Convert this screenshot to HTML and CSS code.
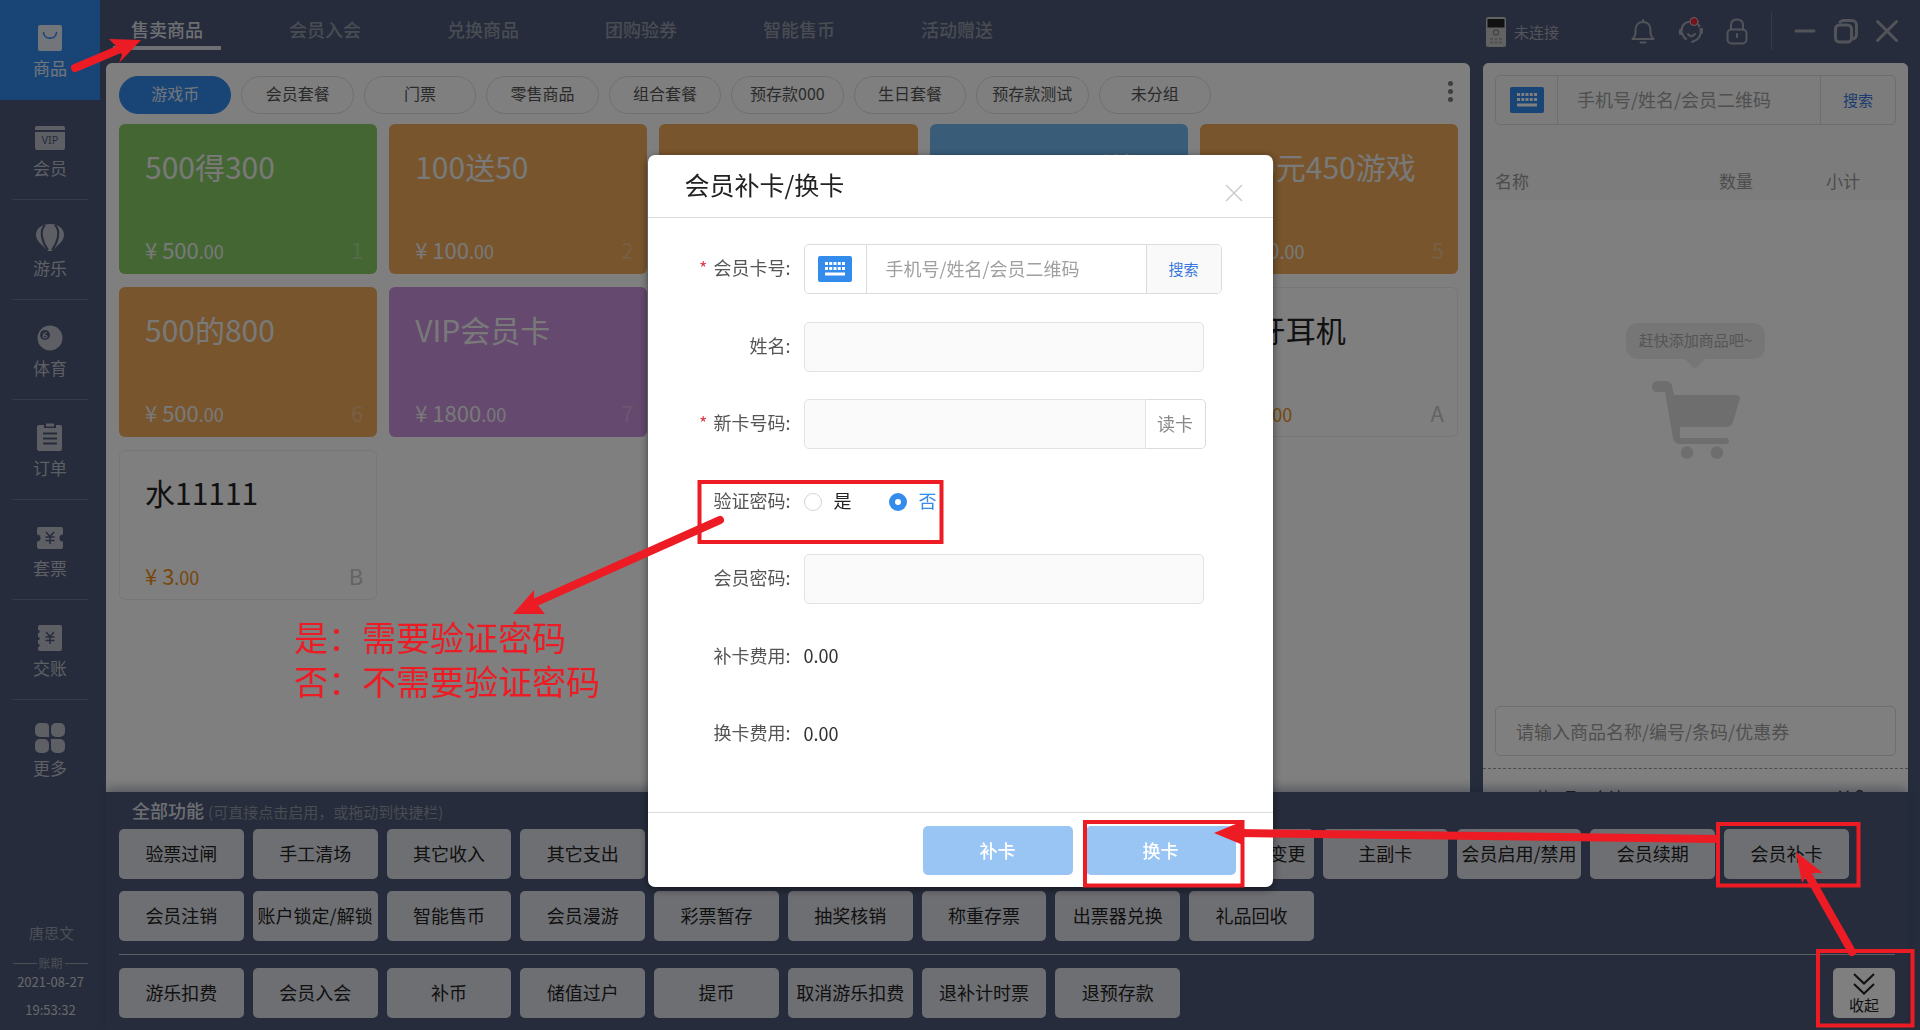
FILE: index.html
```html
<!DOCTYPE html>
<html lang="zh-CN">
<head>
<meta charset="utf-8">
<title>售卖商品 - 会员补卡/换卡</title>
<link rel="stylesheet" href="styles.css">
</head>
<body>
<svg class="sprite" aria-hidden="true">
  <symbol id="icon-keyboard" viewBox="0 0 34 26">
    <rect width="34" height="26" rx="2" fill="#338bec"/>
    <path d="M7 7.5h20M7 12.5h20" stroke="#fff" stroke-width="3" stroke-dasharray="3 1.25"/>
    <path d="M7 18h20" stroke="#fff" stroke-width="3"/>
  </symbol>
</svg>

<div class="app">
  <aside class="sidebar">
    <ul class="side-nav">
      <li><a class="side-link is-active" href="#">
        <svg class="side-icon" viewBox="0 0 32 32"><rect x="4" y="3" width="24" height="26" rx="2" fill="currentColor"/><path d="M9.500 10.500c1 7.500 12 7.500 13 0" fill="none" stroke="#338bec" stroke-width="1.600" stroke-linecap="round"/></svg>
        <span>商品</span></a></li>
      <li><a class="side-link" href="#">
        <svg class="side-icon" viewBox="0 0 32 32"><path d="M1 6a2 2 0 0 1 2-2h26a2 2 0 0 1 2 2v2H1zM1 10h30v16a2 2 0 0 1-2 2H3a2 2 0 0 1-2-2z" fill="currentColor"/><text x="16" y="22" class="vip-text">VIP</text></svg>
        <span>会员</span></a></li>
      <li><a class="side-link" href="#">
        <svg class="side-icon" viewBox="0 0 32 32"><path d="M16 2C24 2 30 6 30 13C30 20 22 24 18 29H14C10 24 2 20 2 13C2 6 8 2 16 2Z" fill="currentColor"/><path d="M11 3C5 9 8 20 14 28M21 3C27 9 24 20 18 28" fill="none" stroke="#4c5977" stroke-width="2"/></svg>
        <span>游乐</span></a></li>
      <li><a class="side-link" href="#">
        <svg class="side-icon" viewBox="0 0 32 32"><circle cx="16" cy="16" r="12.500" fill="currentColor"/><circle cx="11" cy="13" r="5" fill="#4c5977"/><path d="M13 10.500c-4 0-5 5-2 5.500c3 0 2-4-1-2.500" fill="none" stroke="currentColor" stroke-width="1.200"/></svg>
        <span>体育</span></a></li>
      <li><a class="side-link" href="#">
        <svg class="side-icon" viewBox="0 0 32 32"><path d="M5 3h5v3h12V3h4a2 2 0 0 1 2 2v22a2 2 0 0 1-2 2H5a2 2 0 0 1-2-2V5a2 2 0 0 1 2-2z" fill="currentColor"/><path d="M12 1.500h8v3h-8z" fill="currentColor"/><path d="M9 11.500h14M9 16.500h14M9 21.500h14" stroke="#4c5977" stroke-width="2"/></svg>
        <span>订单</span></a></li>
      <li><a class="side-link" href="#">
        <svg class="side-icon" viewBox="0 0 32 32"><path d="M5 5h22a2 2 0 0 1 2 2v5.500a3.500 3.500 0 0 0 0 7V25a2 2 0 0 1-2 2H5a2 2 0 0 1-2-2v-5.500a3.500 3.500 0 0 0 0-7V7a2 2 0 0 1 2-2z" fill="currentColor"/><path d="M12 10l4 4.500l4-4.500M16 14.500V22M11.500 15h9M11.500 18.500h9" fill="none" stroke="#4c5977" stroke-width="1.500"/></svg>
        <span>套票</span></a></li>
      <li><a class="side-link" href="#">
        <svg class="side-icon" viewBox="0 0 32 32"><path d="M6 3h20a2 2 0 0 1 2 2v22a2 2 0 0 1-2 2H6a2 2 0 0 1-2-2v-2h1.500v-3H4v-4h1.500v-3H4v-4h1.500V8H4V5a2 2 0 0 1 2-2z" fill="currentColor"/><path d="M12 10l4 4.500l4-4.500M16 14.500V22M11.500 15h9M11.500 18.500h9" fill="none" stroke="#4c5977" stroke-width="1.500"/></svg>
        <span>交账</span></a></li>
      <li><a class="side-link is-last" href="#">
        <svg class="side-icon" viewBox="0 0 32 32"><path d="M6 1h5a4 4 0 0 1 4 4v10H6a5 5 0 0 1-5-5V6a5 5 0 0 1 5-5zM22 1h4a5 5 0 0 1 5 5v4a5 5 0 0 1-5 5h-4a5 5 0 0 1-5-5V6a5 5 0 0 1 5-5zM6 17h4a5 5 0 0 1 5 5v4a5 5 0 0 1-5 5H6a5 5 0 0 1-5-5v-4a5 5 0 0 1 5-5zM17 17h9a5 5 0 0 1 5 5v4a5 5 0 0 1-5 5h-4a5 5 0 0 1-5-5z" fill="currentColor"/></svg>
        <span>更多</span></a></li>
    </ul>
    <div class="shift">
      <p class="shift-user">唐思文</p>
      <p class="shift-label">账期</p>
      <p class="shift-time">2021-08-27</p>
      <p class="shift-time">19:53:32</p>
    </div>
  </aside>

  <div class="main">
    <header class="topbar">
      <nav class="tabs">
        <a class="tab is-active" href="#">售卖商品</a>
        <a class="tab" href="#">会员入会</a>
        <a class="tab" href="#">兑换商品</a>
        <a class="tab" href="#">团购验券</a>
        <a class="tab" href="#">智能售币</a>
        <a class="tab" href="#">活动赠送</a>
      </nav>
      <div class="device">
        <svg width="20" height="30" viewBox="0 0 20 30"><rect width="20" height="30" rx="2" fill="#c4c4c4"/><rect x="1.500" y="2" width="17" height="8.500" fill="#222"/><circle cx="10" cy="15.500" r="2.600" fill="none" stroke="#888" stroke-width="1.400"/><path d="M4 22h12M4 25.500h12" stroke="#a4a4a4" stroke-width="2" stroke-dasharray="3 1.500"/></svg>
        <span>未连接</span>
      </div>
      <div class="tools">
        <button class="tool" type="button" aria-label="消息"><svg viewBox="0 0 28 28"><path d="M3.500 22h21c-2-2-3-3-3-6v-3c0-5-3-8-7.500-8s-7.500 3-7.500 8v3c0 3-1 4-3 6z"/><path d="M14 5V3M11.500 25.500h5"/></svg></button>
        <button class="tool" type="button" aria-label="客服"><svg viewBox="0 0 28 28"><path d="M5.500 17V14C5.500 8 9.500 4.500 15 4.500c4 0 7 2 8.500 5M4 13v4M6 16c1 3 2 5 4 6M24.500 12v4c0 4-3 7-8.500 9M26 12v4M12 17c2 3 4 3 7 0"/><circle cx="18" cy="4.500" r="4" class="badge"/></svg></button>
        <button class="tool" type="button" aria-label="锁屏"><svg viewBox="0 0 28 28"><rect x="4.500" y="12.500" width="19" height="14" rx="4"/><path d="M8 12V8c0-3.500 2.500-5.500 6-5.500s6 2 6 5.500v4M14 17v3"/></svg></button>
      </div>
      <div class="window-tools">
        <button class="tool" type="button" aria-label="最小化"><svg viewBox="0 0 28 28"><path d="M5 14h18"/></svg></button>
        <button class="tool" type="button" aria-label="还原"><svg viewBox="0 0 28 28"><rect x="3.500" y="8" width="16" height="17" rx="4"/><path d="M8 5c1-1 2-1.500 4-1.500h7c4 0 5.500 1.500 5.500 5.500v8c0 3-1 4-3 5"/></svg></button>
        <button class="tool" type="button" aria-label="关闭"><svg viewBox="0 0 28 28"><path d="M4.500 4.500l19 19M23.500 4.500l-19 19"/></svg></button>
      </div>
    </header>

    <div class="workspace">
      <section class="goods">
        <div class="filters">
          <div class="pills">
            <button class="pill is-active" type="button">游戏币</button>
            <button class="pill" type="button">会员套餐</button>
            <button class="pill" type="button">门票</button>
            <button class="pill" type="button">零售商品</button>
            <button class="pill" type="button">组合套餐</button>
            <button class="pill" type="button">预存款000</button>
            <button class="pill" type="button">生日套餐</button>
            <button class="pill" type="button">预存款测试</button>
            <button class="pill" type="button">未分组</button>
          </div>
          <button class="more" type="button" aria-label="更多分组"><i></i><i></i><i></i></button>
        </div>
        <div class="cards">
          <article class="card green"><h3>500得300</h3><p><span class="price">¥ 500<small>.00</small></span><span class="key">1</span></p></article>
          <article class="card orange"><h3>100送50</h3><p><span class="price">¥ 100<small>.00</small></span><span class="key">2</span></p></article>
          <article class="card orange"></article>
          <article class="card blue"><h3>1000元500送</h3></article>
          <article class="card orange"><h3>300元450游戏</h3><p><span class="price">¥ 300<small>.00</small></span><span class="key">5</span></p></article>
          <article class="card orange"><h3>500的800</h3><p><span class="price">¥ 500<small>.00</small></span><span class="key">6</span></p></article>
          <article class="card purple"><h3>VIP会员卡</h3><p><span class="price">¥ 1800<small>.00</small></span><span class="key">7</span></p></article>
          <article class="card plain row-end"><h3>蓝牙耳机</h3><p><span class="price">¥ 50<small>.00</small></span><span class="key">A</span></p></article>
          <article class="card plain"><h3>水11111</h3><p><span class="price">¥ 3<small>.00</small></span><span class="key">B</span></p></article>
        </div>
      </section>

      <section class="cart">
        <div class="cart-head">
          <div class="search">
            <button class="search-key" type="button" aria-label="键盘"><svg><use href="#icon-keyboard"/></svg></button>
            <input type="text" aria-label="会员查询" placeholder="手机号/姓名/会员二维码">
            <button class="search-go" type="button">搜索</button>
          </div>
          <div class="cart-columns"><span>名称</span><span>数量</span><span>小计</span></div>
        </div>
        <div class="cart-empty">
          <p class="bubble">赶快添加商品吧~</p>
          <svg width="88" height="78" viewBox="0 0 88 78" fill="#dcdcdc"><path d="M5 0H13Q19 0 20 5L22 14H84Q89 14 87.500 19L81 41Q79 46 75 46H28V57H74Q77 57 77 60T74 63H28Q22 63 21 57L13 11H5Q0 11 0 6T5 0Z"/><circle cx="35" cy="71.500" r="6.300"/><circle cx="65" cy="71.500" r="6.300"/></svg>
        </div>
        <div class="cart-entry"><input type="text" aria-label="商品查询" placeholder="请输入商品名称/编号/条码/优惠券"></div>
        <div class="cart-total"><span>共0项，合计</span><span>¥ 0</span></div>
      </section>
    </div>

    <section class="functions">
      <h2>全部功能 <small>(可直接点击启用，或拖动到快捷栏)</small></h2>
      <div class="fn-grid">
        <button type="button">验票过闸</button>
        <button type="button">手工清场</button>
        <button type="button">其它收入</button>
        <button type="button">其它支出</button>
        <button type="button" class="fn-ninth">会员等级变更</button>
        <button type="button">主副卡</button>
        <button type="button">会员启用/禁用</button>
        <button type="button">会员续期</button>
        <button type="button">会员补卡</button>
        <button type="button">会员注销</button>
        <button type="button">账户锁定/解锁</button>
        <button type="button">智能售币</button>
        <button type="button">会员漫游</button>
        <button type="button">彩票暂存</button>
        <button type="button">抽奖核销</button>
        <button type="button">称重存票</button>
        <button type="button">出票器兑换</button>
        <button type="button">礼品回收</button>
      </div>
      <div class="quick">
        <div class="fn-grid">
          <button type="button">游乐扣费</button>
          <button type="button">会员入会</button>
          <button type="button">补币</button>
          <button type="button">储值过户</button>
          <button type="button">提币</button>
          <button type="button">取消游乐扣费</button>
          <button type="button">退补计时票</button>
          <button type="button">退预存款</button>
        </div>
        <button class="collapse" type="button">
          <svg width="22" height="22" viewBox="0 0 22 22"><path d="M1 1l10 9.500L21 1M1 11l10 9.500L21 11" fill="none" stroke="#222" stroke-width="2"/></svg>
          <span>收起</span>
        </button>
      </div>
    </section>
  </div>
</div>

<div class="mask">
  <form class="dialog" role="dialog" aria-labelledby="dialog-title">
    <div class="dialog-head">
      <h1 id="dialog-title">会员补卡/换卡</h1>
      <button class="dialog-close" type="button" aria-label="关闭"><svg width="18" height="18" viewBox="0 0 18 18"><path d="M1 1l16 16M17 1L1 17" stroke="#ccc" stroke-width="1.500"/></svg></button>
    </div>
    <div class="dialog-body">
      <div class="field">
        <label class="is-required" for="card-no">会员卡号:</label>
        <div class="search wide">
          <button class="search-key" type="button" aria-label="键盘"><svg><use href="#icon-keyboard"/></svg></button>
          <input id="card-no" type="text" placeholder="手机号/姓名/会员二维码">
          <button class="search-go" type="button">搜索</button>
        </div>
      </div>
      <div class="field"><label for="member-name">姓名:</label><input class="box" id="member-name" type="text" disabled></div>
      <div class="field">
        <label class="is-required" for="new-card">新卡号码:</label>
        <div class="reader"><input class="box" id="new-card" type="text" disabled><button type="button">读卡</button></div>
      </div>
      <div class="field" role="radiogroup" aria-labelledby="verify-label">
        <span class="label" id="verify-label">验证密码:</span>
        <label class="radio"><input type="radio" name="verify" value="yes"><span>是</span></label>
        <label class="radio"><input type="radio" name="verify" value="no" checked><span>否</span></label>
      </div>
      <div class="field"><label for="member-pass">会员密码:</label><input class="box" id="member-pass" type="password" disabled></div>
      <div class="field"><span class="label">补卡费用:</span><output>0.00</output></div>
      <div class="field"><span class="label">换卡费用:</span><output>0.00</output></div>
    </div>
    <div class="dialog-foot">
      <button type="button">补卡</button>
      <button type="button">换卡</button>
    </div>
  </form>
</div>

<div class="notes">
  <svg width="1920" height="1030" viewBox="0 0 1920 1030">
    <g class="note-line">
      <rect x="699.500" y="482" width="242" height="60"/>
      <rect x="1085" y="822" width="157.500" height="63.500"/>
      <rect x="1718" y="824" width="140.500" height="61.500"/>
      <rect x="1818" y="951" width="94.500" height="74.500"/>
    </g>
    <g class="note-arrow">
      <path d="M75 68L120 49"/><path class="head" d="M141 40L109 39L117 47L122 55L119 63Z"/>
      <path d="M720 520L536 602"/><path class="head" d="M513 614L534 590L534 600L540 608L545 614Z"/>
      <path class="flat" d="M1718 839L1238 833"/><path class="head" d="M1214 833L1243 821V845Z"/>
      <path d="M1852 952L1810 878"/><path class="head" d="M1796 852L1823 873L1814 873L1805 878L1802 883Z"/>
    </g>
  </svg>
  <p class="note-text">是：需要验证密码<br>否：不需要验证密码</p>
</div>
</body>
</html>
```

FILE: styles.css
```css
* { box-sizing: border-box; }

body {
  margin: 0;
  font: 18px/24px "Noto Sans CJK SC", "Noto Sans", sans-serif;
  color: #333;
  background: #4c5977;
}

h1, h2, h3, p, ul { margin: 0; padding: 0; font-weight: 400; }
ul { list-style: none; }
a { text-decoration: none; color: inherit; }
button, input { font: inherit; color: inherit; margin: 0; padding: 0; border: 0; background: none; }
input { min-width: 0; outline: 0; }
.sprite { position: absolute; width: 0; height: 0; }

.app { display: flex; height: 100vh; min-height: 1030px; overflow: hidden; }

/* Sidebar */
.sidebar { flex: 0 0 100px; display: flex; flex-direction: column; justify-content: space-between; color: #bbbfca; }
.side-link {
  display: flex; flex-direction: column; align-items: center; gap: 2px;
  height: 100px; margin: 0 12px; padding-top: 22px;
  border-bottom: 1px solid #6c7690; font-size: 17px;
}
.side-link.is-active { margin: 0; border: 0; background: #338bec; color: #e4ebf5; }
.side-link.is-last { border: 0; }
.side-icon { width: 32px; height: 32px; }
.vip-text { font: 11px/1 "Noto Sans", sans-serif; fill: #4c5977; text-anchor: middle; }
.shift { padding: 0 12px 6px 13px; text-align: center; font-size: 13px; }
.shift-user { font-size: 15px; color: #989eac; margin: 0 -2px 8px 0; }
.shift-label { display: flex; align-items: center; gap: 2px; font-size: 12px; line-height: 20px; color: #989eac; }
.shift-label::before, .shift-label::after { content: ""; flex: 1; border-top: 1px solid #989eac; }
.shift-time { line-height: 28px; color: #cfd2da; margin-top: -5px; }
.shift-time + .shift-time { margin-top: 0; }

/* Top bar */
.main { flex: 1; min-width: 0; display: flex; flex-direction: column; padding: 0 12px 0 6px; }
.topbar { flex: 0 0 63px; display: flex; align-items: flex-start; color: #a4a9b5; }
.tabs { display: flex; gap: 50px; padding-left: 7px; margin-right: auto; }
.tab { width: 108px; height: 50px; padding-top: 14px; line-height: 30px; text-align: center; font-weight: 500; border-bottom: 4px solid transparent; color: #9298a6; }
.tab.is-active { color: #dcdee4; border-color: #dcdee4; }
.device { display: flex; align-items: center; gap: 8px; height: 63px; margin-right: 70px; font-size: 15px; }
.tools { display: flex; gap: 19px; height: 38px; margin-top: 12px; padding-right: 20px; border-right: 1px solid #6c7690; align-items: center; }
.window-tools { display: flex; gap: 13px; height: 38px; margin: 12px 7px 0 19px; align-items: center; }
.tool { width: 28px; height: 28px; }
.tool svg { display: block; width: 28px; height: 28px; fill: none; stroke: #a4a9b5; stroke-width: 2; stroke-linecap: round; stroke-linejoin: round; }
.window-tools svg { stroke-width: 3; }
.tool .badge { fill: #e6263c; stroke: #d5c5cb; stroke-width: 1; }

/* Goods */
.workspace { flex: 1; min-height: 0; display: flex; gap: 13px; }
.goods { flex: 1; min-width: 0; background: #fff; border-radius: 6px 6px 0 0; padding: 13px 12px 0 13px; }
.filters { display: flex; justify-content: space-between; align-items: center; margin-bottom: 10px; }
.pills { flex: 0 1 1092px; display: grid; grid-template-columns: repeat(9, 1fr); gap: 10px; }
.pill { height: 38px; padding-bottom: 3px; border: 1px solid #dcdfe6; border-radius: 19px; font-size: 16px; line-height: 33px; color: #555; white-space: nowrap; }
.pill.is-active { background: #338bec; border-color: #338bec; color: #e4ebf5; }
.more { display: grid; gap: 3px; margin-right: 5px; padding-bottom: 8px; }
.more i { width: 5px; height: 5px; border-radius: 50%; background: #7c7c7c; }
.cards { display: grid; grid-template-columns: repeat(5, 1fr); gap: 13px 12px; }
.card { height: 150px; border-radius: 6px; padding: 22px 14px 9px 26px; display: flex; flex-direction: column; justify-content: space-between; color: #f2f2f2; }
.card h3 { font-size: 30px; line-height: 40px; white-space: nowrap; }
.card p { display: flex; justify-content: space-between; font-size: 22px; line-height: 28px; }
.card small { font-size: 18px; }
.key { opacity: .3; }
.green { background: #88cc66; }
.orange { background: #f0aa5a; }
.blue { background: #72baf2; }
.purple { background: #ca92de; }
.plain { box-shadow: inset 0 0 0 1px #eeeff2; color: #222; }
.plain .price { color: #ee8f13; }
.plain .key { color: #777; opacity: .4; }
.row-end { grid-column: 5; }

/* Search box */
.search { display: flex; height: 50px; border: 1px solid #dcdcdc; border-radius: 5px; overflow: hidden; }
.search-key { flex: 0 0 62px; display: flex; align-items: center; justify-content: center; border-right: 1px solid #dcdcdc; }
.search-key svg { width: 34px; height: 26px; }
.search input { flex: 1; padding: 0 19px 2px; }
.search-go { flex: 0 0 75px; border-left: 1px solid #dcdcdc; font-size: 15px; color: #3878e0; }
input::placeholder { color: #a0a0a0; opacity: 1; }

/* Cart */
.cart { flex: 0 0 425px; display: flex; flex-direction: column; background: #fff; border-radius: 6px 6px 0 0; overflow: hidden; }
.cart-head { background: #f8f8f8; height: 137px; padding: 12px; }
.cart-columns { display: grid; grid-template-columns: 224px 107px 1fr; padding-top: 44px; font-size: 17px; color: #999; }
.cart-empty { flex: 1; display: flex; flex-direction: column; align-items: center; gap: 22px; padding-top: 123px; }
.bubble { position: relative; padding: 5px 13px 7px; border-radius: 12px; background: #ececec; color: #aaa; font-size: 15px; }
.bubble::after { content: ""; position: absolute; top: 100%; left: 50%; margin-left: -10px; border: 10px solid transparent; border-bottom: 0; border-top-color: #ececec; }
.cart-entry { padding: 0 12px 12px; border-bottom: 1px dashed #999; }
.cart-entry input { width: 100%; height: 50px; padding: 0 20px; border: 1px solid #dcdcdc; border-radius: 5px; }
.cart-total { height: 23px; padding: 16px 43px 0 52px; display: flex; justify-content: space-between; font-size: 16px; }
.cart-total span + span { font-size: 20px; }

/* Function panel */
.functions { position: relative; padding: 6px 13px 12px; background: #4c5977; box-shadow: 0 -4px 10px rgba(40, 60, 90, .4); }
.functions h2 { padding-left: 13px; margin-bottom: 7px; font-size: 18px; line-height: 24px; font-weight: 500; color: #dcdee4; }
.functions h2 small { font-size: 15px; line-height: 20px; font-weight: 400; color: #9298a6; }
.fn-grid { display: grid; grid-template-columns: repeat(13, 1fr); gap: 12px 9px; margin-right: 46px; }
.fn-grid button { height: 50px; padding-bottom: 3px; border-radius: 5px; background: #dddee5; color: #222; white-space: nowrap; }
.fn-grid .fn-ninth { grid-column: 9; }
.quick { display: grid; grid-template-columns: 1fr; margin-top: 13px; padding-top: 13px; border-top: 1px solid #b9bdc8; }
.quick .fn-grid, .collapse { grid-area: 1 / 1; }
.collapse { justify-self: end; width: 62px; height: 50px; padding-top: 5px; border-radius: 5px; background: #fff; color: #222; font-size: 15px; line-height: 20px; display: flex; flex-direction: column; align-items: center; }

/* Dialog */
.mask { position: fixed; inset: 0; display: flex; align-items: center; justify-content: center; padding-top: 12px; background: rgba(0, 0, 0, .5); }
.dialog { width: 625px; min-height: 732px; display: flex; flex-direction: column; border-radius: 7px; background: #fff; box-shadow: 0 2px 8px rgba(0, 0, 0, .5); }
.dialog-head { display: flex; align-items: center; justify-content: space-between; height: 63px; padding: 0 30px 0 37px; border-bottom: 1px solid #dcdcdc; }
.dialog-head h1 { padding-bottom: 4px; font-size: 25px; line-height: 36px; color: #222; }
.dialog-close { display: flex; margin-top: 14px; }
.dialog-body { flex: 1; display: flex; flex-direction: column; justify-content: space-between; padding: 26px 0 53px; }
.field { display: flex; align-items: center; height: 50px; color: #333; }
.field > label:first-child, .label { flex: 0 0 156px; padding: 0 13px 4px 0; text-align: right; color: #555; }
.is-required::before { content: "*"; margin-right: 6px; color: #e03a48; }
.search.wide { width: 418px; }
.wide .search-go { background: #f9f9f9; }
.box { width: 400px; height: 50px; padding: 0 20px; border: 1px solid #e2e2e2; border-radius: 5px; background: #fafafa; }
.reader { display: flex; width: 402px; }
.reader .box { flex: 1; border-radius: 5px 0 0 5px; }
.reader button { flex: 0 0 60px; padding-bottom: 2px; border: 1px solid #dcdcdc; border-left: 0; border-radius: 0 5px 5px 0; color: #888; }
.radio { display: flex; align-items: center; gap: 12px; margin-right: 37px; color: #222; }
.radio span { line-height: 22px; padding-bottom: 4px; }
.radio input { appearance: none; width: 18px; height: 18px; border: 1px solid #d4d4d4; border-radius: 50%; background: #fff; }
.radio input:checked { border: 6px solid #338bec; }
.radio input:checked + span { color: #338bec; }
.field output { padding-bottom: 3px; }
.dialog-foot { display: flex; justify-content: flex-end; gap: 13px; height: 75px; padding: 13px 37px 12px 0; border-top: 1px solid #dcdcdc; }
.dialog-foot button { width: 150px; height: 49px; padding-bottom: 2px; border-radius: 5px; background: #99c5f5; color: #fff; font-weight: 500; }

/* Annotations */
.notes { position: absolute; top: 0; left: 0; pointer-events: none; }
.notes svg { display: block; }
.note-line { fill: none; stroke: #ed1c24; stroke-width: 4; }
.note-arrow { fill: none; stroke: #ed1c24; stroke-width: 8; stroke-linecap: round; }
.note-arrow .flat { stroke-linecap: butt; }
.note-arrow .head { fill: #ed1c24; stroke: none; }
.note-text { position: absolute; top: 615px; left: 294px; font-size: 34px; line-height: 44px; color: #ed1c24; white-space: nowrap; }
```
